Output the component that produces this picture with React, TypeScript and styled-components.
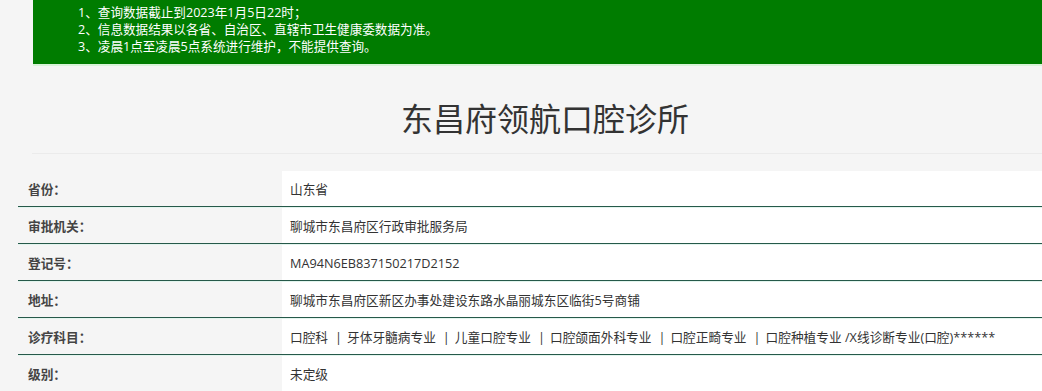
import styled, { createGlobalStyle } from "styled-components";

const GlobalStyle = createGlobalStyle`
  html, body {
    margin: 0;
    padding: 0;
    background: #f5f5f5;
    overflow: hidden;
  }
  body {
    font-family: "Open Sans", "Noto Sans CJK SC", sans-serif;
    color: #333;
  }
`;

const Page = styled.div`
  width: 1054px;
  margin-left: 18px;
`;

const Notice = styled.div`
  margin-left: 15px;
  width: 1040px;
  background: #007c00;
  color: #fff;
  font-size: 12.6px;
  line-height: 17px;
  padding: 4px 0 9px 45px;
  box-sizing: border-box;
  border-bottom: 2px solid #d8f3d8;
`;

const Title = styled.h1`
  margin: 0;
  padding-top: 33px;
  height: 54px;
  text-align: center;
  font-size: 32px;
  font-weight: 400;
  line-height: 40px;
  color: #333;
`;

const Divider = styled.hr`
  margin: 0 0 0 14px;
  border: 0;
  border-top: 1px solid #ebebeb;
  height: 0;
`;

const InfoTable = styled.div`
  margin-top: 17px;
  width: 1040px;
`;

const Row = styled.div`
  display: grid;
  grid-template-columns: 264px 1fr;
  height: 35px;
  border-bottom: 1px solid #26594a;
  box-shadow: 0 1px 0 #e3f5ee;
  margin-bottom: 1px;
`;

const Label = styled.div`
  display: flex;
  align-items: center;
  padding-left: 10px;
  font-size: 12.7px;
  font-weight: 600;
  color: #444;
`;

const Value = styled.div`
  display: flex;
  align-items: center;
  padding-left: 8px;
  background: #fff;
  font-size: 12.7px;
  color: #333;
  white-space: pre;
`;

const Sep = styled.span`
  margin: 0 5px 0 7px;
`;

const rows: [string, string][] = [
  ["省份：", "山东省"],
  ["审批机关：", "聊城市东昌府区行政审批服务局"],
  ["登记号：", "MA94N6EB837150217D2152"],
  ["地址：", "聊城市东昌府区新区办事处建设东路水晶丽城东区临街5号商铺"],
  [
    "诊疗科目：",
    "口腔科|牙体牙髓病专业|儿童口腔专业|口腔颌面外科专业|口腔正畸专业|口腔种植专业 /X线诊断专业(口腔)******",
  ],
  ["级别：", "未定级"],
];

const App = () => {
  return (
    <Page>
      <GlobalStyle />
      <Notice>
        <div>1、查询数据截止到2023年1月5日22时；</div>
        <div>2、信息数据结果以各省、自治区、直辖市卫生健康委数据为准。</div>
        <div>3、凌晨1点至凌晨5点系统进行维护，不能提供查询。</div>
      </Notice>
      <Title>东昌府领航口腔诊所</Title>
      <Divider />
      <InfoTable>
        {rows.map(([label, value]) => (
          <Row key={label}>
            <Label>{label}</Label>
            <Value>
              {value.split("|").map((part, i) => (
                <span key={i}>
                  {i > 0 && <Sep>|</Sep>}
                  {part}
                </span>
              ))}
            </Value>
          </Row>
        ))}
      </InfoTable>
    </Page>
  );
};

export default App;
